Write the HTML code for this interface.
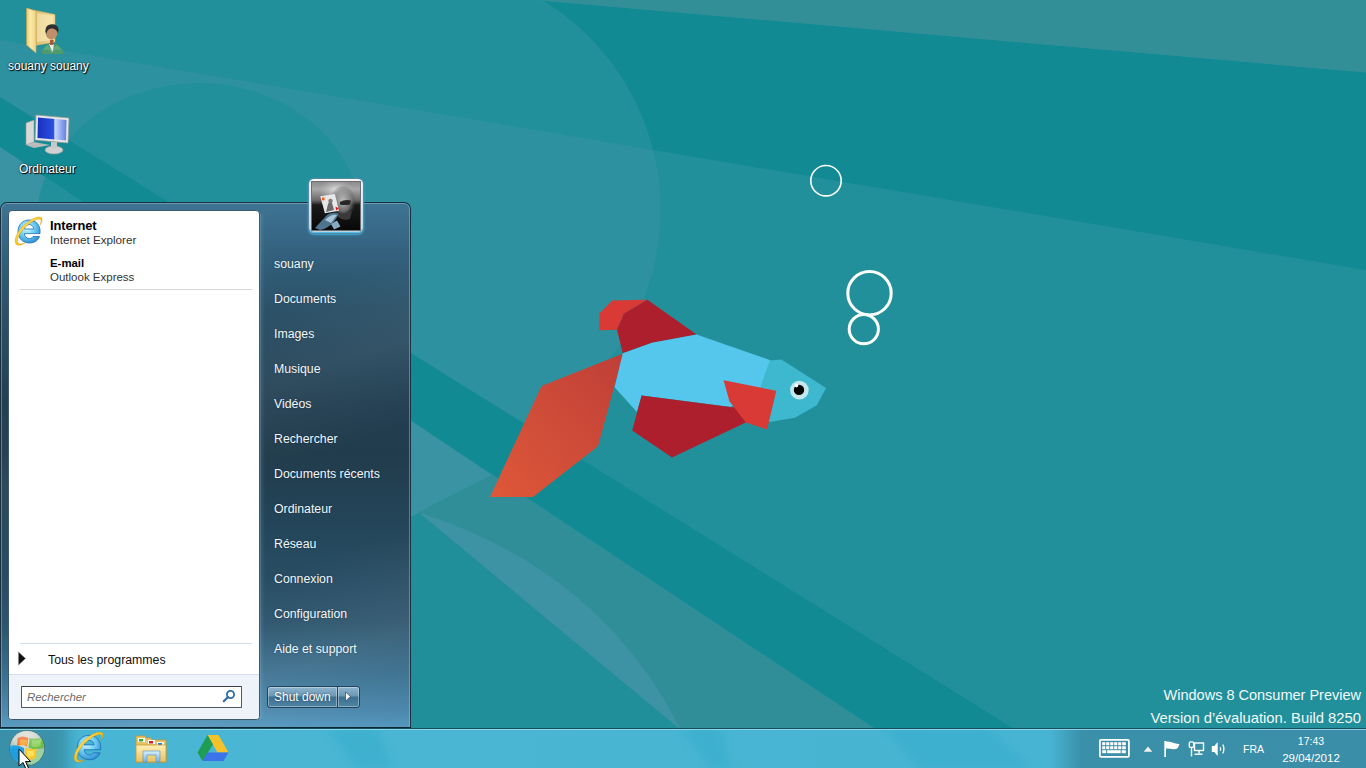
<!DOCTYPE html>
<html><head><meta charset="utf-8">
<style>
html,body{margin:0;padding:0;width:1366px;height:768px;overflow:hidden;background:#128a93;font-family:"Liberation Sans",sans-serif;}
.abs{position:absolute;}
#bg{position:absolute;left:0;top:0;width:1366px;height:768px;}
</style></head><body>
<svg id="bg" width="1366" height="768" viewBox="0 0 1366 768">
  <defs>
    <clipPath id="belowG"><polygon points="0,147 874,728 1366,1200 0,1200"/></clipPath>
    <clipPath id="belowB"><polygon points="0,40 1366,270 1366,768 0,768"/></clipPath>
    <clipPath id="rightArc"><path d="M415.5,-100 V-35.3 A245,245 0 0,1 415.5,454.7 V900 H1400 V-100 Z"/></clipPath>
    <clipPath id="bandCG"><polygon points="0,97 1366,948 1366,1200 0,1200 0,147 874,728 0,147"/></clipPath>
    <linearGradient id="tailg" x1="1" y1="0" x2="0" y2="1">
      <stop offset="0" stop-color="#bf3f38"/><stop offset="1" stop-color="#de5838"/>
    </linearGradient>
  </defs>
  <!-- base medium -->
  <rect width="1366" height="768" fill="#22909b"/>
  <!-- dark between A and B, outside circle -->
  <polygon points="0,0 534,0 1366,72.5 1366,270 0,40" fill="#128a93" clip-path="url(#rightArc)"/>
  <!-- above line A -->
  <polygon points="534,0 1366,0 1366,72.5" fill="#328f98"/>
  <!-- light below B, inside circle or left -->
  <g clip-path="url(#belowB)">
    <path d="M-10,-10 H415.5 V-35.3 A245,245 0 0,1 415.5,454.7 V800 H-10 Z" fill="#2e919f"/>
    <ellipse cx="199" cy="224" rx="163" ry="141" fill="#22909b"/>
  </g>
  <!-- dark band between C and G -->
  <polygon points="0,97 1366,948 1366,1200 1120,1200 0,147" fill="#128a93"/>
  <!-- region below G -->
  <polygon points="0,147 874,728 1366,1200 0,1200" fill="#218f9a"/>
  <!-- region 3 light -->
  <polygon points="0,147 492,475 419,512.5 0,726" fill="#3a93a3"/>
  <g clip-path="url(#belowG)"><ellipse cx="199" cy="224" rx="163" ry="141" fill="#22909b"/></g>
  <!-- wedge grayish -->
  <polygon points="419,512.5 492,475 874,728 681,730" fill="#2f8e98"/>
  <!-- lens -->
  <path d="M419,512.5 Q600,570 681,730 Z" fill="#3d93a3"/>

  <!-- fish -->
  <polygon points="623.3,353.6 541.6,386 490,497 533,497 598,446.2" fill="url(#tailg)"/>
  <polygon points="599.4,313.4 612.3,300.5 647.4,299.8 624,313.4 617,329.8 599.4,330.3" fill="#d93a35"/>
  <polygon points="647.4,299.8 696.6,334.5 652.1,342.7 622.8,353.3 617,329.8 624,313.4" fill="#ad1f2d"/>
  <polygon points="622.8,353.3 652.1,342.7 696.6,334.5 770.5,360.3 761,388.4 730.6,407 641.6,395.5 636.9,411.9 614.6,387.3" fill="#55c6ec"/>
  <polygon points="769.9,360.4 781.4,359.6 826.1,388 816.8,405.2 794.9,417.7 769.4,421.9 761,385.4" fill="#3db8cf"/>
  <polygon points="641.6,395.5 740,408.3 745.8,422.4 672,457.6 632.2,430.6" fill="#ad1f2d"/>
  <polygon points="723.6,380.2 776.3,390.8 767,429.4 745.8,422.4 729.4,401.3" fill="#d93a35"/>
  <circle cx="799.4" cy="390.1" r="9.3" fill="#c5e6ec"/>
  <circle cx="799" cy="389.9" r="5.2" fill="#000"/>
  <circle cx="796.5" cy="385.6" r="1.8" fill="#fff"/>
  <!-- bubbles -->
  <circle cx="826" cy="180.7" r="15.2" fill="none" stroke="#fff" stroke-width="1.6"/>
  <circle cx="869.5" cy="293.2" r="21.7" fill="none" stroke="#fff" stroke-width="3"/>
  <circle cx="863.8" cy="329.2" r="14.6" fill="none" stroke="#fff" stroke-width="3"/>
</svg>


<!-- START MENU -->
<div class="abs" id="sm" style="left:0;top:202px;width:411px;height:526px;">
  <div class="abs" style="left:0;top:0;width:409px;height:525px;border:1px solid #1a3040;border-bottom:none;border-radius:7px 7px 0 0;background:linear-gradient(180deg,#3f7494 0%,#386a88 5%,#315d78 12%,#2c5268 20%,#233f52 38%,#213c4c 48%,#24465a 62%,#2c546c 80%,#3a7090 90%,#4a88ad 97%,#5598bf 100%);overflow:hidden;">
    <div class="abs" style="left:0;top:0;right:0;bottom:0;background:linear-gradient(160deg,rgba(255,255,255,0) 30%,rgba(255,255,255,0.05) 42%,rgba(255,255,255,0) 55%,rgba(255,255,255,0) 70%,rgba(255,255,255,0.07) 85%,rgba(255,255,255,0) 100%);"></div>
    <div class="abs" style="left:0;top:0;right:0;bottom:0;border:1px solid rgba(160,200,225,0.45);border-bottom:1px solid rgba(170,215,240,0.8);border-radius:6px 6px 0 0;"></div>
  </div>
  <div class="abs" style="left:0;top:525px;width:411px;height:1px;background:#0f2633;"></div>
</div>
<div class="abs" style="left:260px;top:214px;width:5px;height:505px;background:linear-gradient(90deg,rgba(140,185,210,0.55) 0,rgba(140,185,210,0.15) 1px,rgba(140,185,210,0) 5px);"></div>
<!-- white panel -->
<div class="abs" style="left:8px;top:210px;width:250px;height:508px;border:1px solid #3c5a6e;border-radius:4px;background:#fff;overflow:hidden;">
  <div class="abs" style="left:0;top:463px;width:250px;height:45px;background:#eef3fa;border-top:1px solid #d3dfec;"></div>
</div>
<style>
.lt{position:absolute;left:50px;font-size:12px;color:#000;white-space:nowrap;line-height:14px;}
.lt b{font-weight:bold;}
.rt{position:absolute;left:274px;font-size:12.3px;color:#f2f6f8;white-space:nowrap;line-height:14px;text-shadow:0 0 2px rgba(0,20,40,0.35);}
</style>
<div class="lt" style="top:219px;font-weight:bold;font-size:12.9px;letter-spacing:-0.1px;">Internet</div>
<div class="lt" style="top:233px;color:#333;font-size:11.7px;">Internet Explorer</div>
<div class="lt" style="top:256px;font-weight:bold;font-size:11.4px;">E-mail</div>
<div class="lt" style="top:270px;color:#333;font-size:11.5px;">Outlook Express</div>
<div class="abs" style="left:20px;top:289px;width:232px;height:1px;background:#d8d8d8;"></div>
<div class="abs" style="left:20px;top:643px;width:232px;height:1px;background:#d4e0ee;"></div>
<div class="lt" style="left:48px;top:653px;color:#111;font-size:12.3px;">Tous les programmes</div>
<svg class="abs" style="left:17px;top:651px" width="10" height="15" viewBox="0 0 10 15"><path d="M1.5,1 L8.5,7.5 L1.5,14 Z" fill="#111" stroke="#888" stroke-width="0.6"/></svg>
<!-- search box -->
<div class="abs" style="left:21px;top:686px;width:219px;height:20px;border:1px solid #505a64;border-top-color:#3a3f44;background:#fff;border-radius:1px;"></div>
<div class="abs" style="left:27px;top:690px;font-size:11.4px;font-style:italic;color:#6a6a6a;line-height:14px;">Rechercher</div>
<svg class="abs" style="left:222px;top:689px" width="14" height="14" viewBox="0 0 14 14"><circle cx="8.5" cy="5.5" r="3.6" fill="none" stroke="#2d6da8" stroke-width="1.8"/><path d="M6,8 L1.8,12.2" stroke="#2d6da8" stroke-width="2.2" stroke-linecap="round"/></svg>

<div class="rt" style="top:257px;">souany</div>
<div class="rt" style="top:292px;">Documents</div>
<div class="rt" style="top:327px;">Images</div>
<div class="rt" style="top:362px;">Musique</div>
<div class="rt" style="top:397px;">Vidéos</div>
<div class="rt" style="top:432px;">Rechercher</div>
<div class="rt" style="top:467px;">Documents récents</div>
<div class="rt" style="top:502px;">Ordinateur</div>
<div class="rt" style="top:537px;">Réseau</div>
<div class="rt" style="top:572px;">Connexion</div>
<div class="rt" style="top:607px;">Configuration</div>
<div class="rt" style="top:642px;">Aide et support</div>
<!-- shut down -->
<div class="abs" style="left:267px;top:686px;width:69px;height:20px;border:1px solid #1f4460;border-radius:3px 0 0 3px;background:linear-gradient(180deg,#8fb5cc 0%,#6b98b5 45%,#3e7090 50%,#4f84a4 100%);box-shadow:inset 0 0 0 1px rgba(255,255,255,0.35);"></div>
<div class="abs" style="left:274px;top:690px;font-size:12px;color:#fff;line-height:14px;text-shadow:0 0 2px rgba(0,30,60,0.7);">Shut down</div>
<div class="abs" style="left:337px;top:686px;width:21px;height:20px;border:1px solid #1f4460;border-radius:0 3px 3px 0;background:linear-gradient(180deg,#8fb5cc 0%,#6b98b5 45%,#3e7090 50%,#4f84a4 100%);box-shadow:inset 0 0 0 1px rgba(255,255,255,0.35);"></div>
<svg class="abs" style="left:344px;top:691px" width="8" height="11" viewBox="0 0 8 11"><path d="M1.5,1 L6.5,5.5 L1.5,10 Z" fill="#fff" stroke="#2a4a60" stroke-width="0.7"/></svg>
<!-- user picture -->
<div class="abs" style="left:308px;top:178px;width:54px;height:54px;border:1px solid #5a8aa5;border-radius:6px;background:linear-gradient(180deg,#f6f9fb 0%,#e2ecf2 45%,#c4d8e4 100%);box-shadow:0 1px 2px rgba(58,176,224,0.9), inset 0 -1px 1px #48b8e8;"></div>
<div class="abs" style="left:312px;top:182px;width:48px;height:48px;overflow:hidden;background:linear-gradient(180deg,#8c8c8c 0%,#a8a8a8 15%,#6a6a6a 38%,#1a1a1a 48%,#080808 100%);box-shadow:0 0 0 1px #6e6e6e;">
  <svg width="48" height="48" viewBox="0 0 48 48">
    <defs><radialGradient id="face" cx="0.5" cy="0.45" r="0.5"><stop offset="0" stop-color="#c8c8c8" stop-opacity="0.95"/><stop offset="0.6" stop-color="#8a8a8a" stop-opacity="0.7"/><stop offset="1" stop-color="#404040" stop-opacity="0"/></radialGradient>
    <radialGradient id="smoke" cx="0.5" cy="0.5" r="0.5"><stop offset="0" stop-color="#e8e8e8" stop-opacity="0.85"/><stop offset="1" stop-color="#c0c0c0" stop-opacity="0"/></radialGradient></defs>
    <ellipse cx="24" cy="8" rx="17" ry="11" fill="url(#smoke)"/>
    <ellipse cx="31" cy="21" rx="13" ry="17" fill="url(#face)"/>
    <path d="M28,20 Q33,17 39,18.5 L38,22.5 Q32,23.5 28,22.5 Z" fill="#262626"/>
    <path d="M27,31 Q33,34 40,29 L38,37 Q31,39 26,35 Z" fill="#3a3a3a"/>
    <polygon points="8.3,14.2 22.9,12.1 27,28.75 12.9,31.25" fill="#e8e8e8"/>
    <path d="M14,30 L16,22 Q18,18 20,21 L22,28 Z" fill="#6a6a6a"/>
    <circle cx="18.5" cy="19" r="2.2" fill="#7a7a7a"/>
    <rect x="10" y="15.5" width="2.6" height="2.8" fill="#f05a20"/>
    <polygon points="23.5,24.5 27,26.5 24,28.5" fill="#e81818"/>
    <path d="M3,46 L15,33 Q21,29 27,32 L22,40 Q15,47 8,48 Z" fill="#4e7490"/>
    <path d="M13,38 Q19,32 25,33 L19,41 Z" fill="#a8c4d8"/>
    <path d="M19,42 L25,38.5 L28.5,44.5 L22,47.5 Z" fill="#88aac0"/>
  </svg>
</div>
<!-- watermark -->
<div class="abs" style="right:5px;top:686.5px;font-size:14.5px;color:#f4f8f8;line-height:17px;white-space:nowrap;text-align:right;">Windows 8 Consumer Preview</div>
<div class="abs" style="right:5px;top:710px;font-size:14.8px;color:#f4f8f8;line-height:17px;white-space:nowrap;text-align:right;">Version d’évaluation. Build 8250</div>
<!-- desktop icons -->
<style>.dl{position:absolute;font-size:12px;color:#fff;line-height:14px;white-space:nowrap;text-shadow:1px 1px 1px #000,0 0 2px rgba(0,0,0,0.8);}</style>
<div class="dl" style="left:8px;top:59px;">souany souany</div>
<div class="dl" style="left:19px;top:162px;">Ordinateur</div>
<svg class="abs" style="left:24px;top:6px" width="42" height="50" viewBox="0 0 42 50">
  <defs><linearGradient id="fld" x1="0" y1="0" x2="1" y2="0"><stop offset="0" stop-color="#e8c870"/><stop offset="0.4" stop-color="#fbeaa8"/><stop offset="1" stop-color="#f0d488"/></linearGradient>
  <linearGradient id="fldb" x1="0" y1="0" x2="1" y2="0"><stop offset="0" stop-color="#d8b868"/><stop offset="1" stop-color="#f4dc98"/></linearGradient></defs>
  <polygon points="9,4 31,8.5 31,36 9,40" fill="url(#fldb)" stroke="#d0b060" stroke-width="0.5"/>
  <polygon points="13,7 29,10 29,34 13,36" fill="#f8ecc0" opacity="0.6"/>
  <polygon points="2.5,2 12,5 12,47 2.5,39" fill="url(#fld)" stroke="#c8a450" stroke-width="0.6"/>
  <g transform="translate(2,1)">
  <path d="M16,47 Q16,37 26,36.5 Q36,37 37.5,47 Z" fill="#4f9a6c"/>
  <path d="M21,38 Q26,44 31,38 Q34,40 35,44 Q30,40 26,46 Q22,40 17.5,44 Q18.5,40 21,38Z" fill="#6ab888" opacity="0.6"/>
  <path d="M23,37 L28,37 L26.5,45 Z" fill="#f0f0f0"/>
  <rect x="24" y="33" width="3.5" height="5" fill="#a85a38"/>
  <ellipse cx="25.5" cy="25.5" rx="6" ry="7.2" fill="#c0906a"/>
  <path d="M19.3,24.5 Q19.3,17.3 26,17.3 Q32.2,17.3 32.7,23 L31.7,26 Q30,21 25,21.5 Q21,22 20.5,27 Z" fill="#2e2e2e"/>
  </g>
</svg>
<svg class="abs" style="left:24px;top:112px" width="50" height="46" viewBox="0 0 50 46">
  <defs><linearGradient id="scr" x1="0" y1="0" x2="1" y2="0"><stop offset="0" stop-color="#1a2fc0"/><stop offset="0.55" stop-color="#2a50e0"/><stop offset="0.6" stop-color="#c8d8ff"/><stop offset="1" stop-color="#6080e0"/></linearGradient></defs>
  <path d="M2,11 L10,8 L10,30 L2,33 Z" fill="#d8d8d8" stroke="#999" stroke-width="0.6"/>
  <path d="M10,30 L26,33 L10,36 L2,33Z" fill="#bbb"/>
  <polygon points="12,3 45,6 44,31 11,28" fill="#e8e8e8" stroke="#9a9a9a" stroke-width="0.8"/>
  <polygon points="14,5.5 42.5,8 42,28.5 13.5,26" fill="url(#scr)"/>
  <ellipse cx="30" cy="38" rx="9" ry="4" fill="#d0d0d0" stroke="#a0a0a0" stroke-width="0.6"/>
  <rect x="27" y="30" width="6" height="6" fill="#c8c8c8"/>
</svg>
<!-- TASKBAR -->
<div class="abs" style="left:0;top:728px;width:1366px;height:40px;background:linear-gradient(90deg,#3a8fa8 0px,#3b92aa 53px,#3c98b1 62px,#42a8c4 70px,#49b5d4 80px,#4ab6d4 300px,#48b4d3 1050px,#3a8fa9 1082px,#3a8ea8 1366px);"></div>
<svg class="abs" style="left:0;top:728px" width="1366" height="40" viewBox="0 0 1366 40">
  <defs><filter id="tbblur"><feGaussianBlur stdDeviation="4"/></filter></defs>
  <g filter="url(#tbblur)" fill="#2aa8c8" opacity="0.35">
    <polygon points="326,0 378,0 392,40 357,40"/>
    <polygon points="680,0 721,0 732,40 710,40"/>
    <polygon points="882,0 988,0 1032,40 919,40"/>
  </g>
</svg>
<div class="abs" style="left:0;top:728px;width:1366px;height:1px;background:#17505c;"></div>
<div class="abs" style="left:0;top:729px;width:1366px;height:1px;background:rgba(150,220,240,0.85);"></div>
<!-- start orb -->
<svg class="abs" style="left:8px;top:730px" width="38" height="38" viewBox="0 0 38 38">
  <defs>
    <radialGradient id="orb" cx="0.45" cy="0.3" r="0.75"><stop offset="0" stop-color="#e6e2d6"/><stop offset="0.55" stop-color="#b8c8c0"/><stop offset="1" stop-color="#5a8a90"/></radialGradient>
    <linearGradient id="gloss" x1="0" y1="0" x2="0" y2="1"><stop offset="0" stop-color="#fff" stop-opacity="0.8"/><stop offset="1" stop-color="#fff" stop-opacity="0"/></linearGradient>
    <clipPath id="orbc"><circle cx="19" cy="18" r="17.3"/></clipPath>
  </defs>
  <circle cx="19" cy="18" r="17.5" fill="url(#orb)" stroke="#3a6a70" stroke-width="0.8"/>
  <g clip-path="url(#orbc)">
    <path d="M-2,17 Q8,13 16,18 L16,40 L-2,40 Z" fill="#28a8e0"/>
    <path d="M20,19 Q28,22 40,17 L40,30 Q30,38 20,34 Z" fill="#9ed0a0"/>
    <path d="M9.5,8 Q14,5 20.5,8 L19,16.5 Q14.5,14 9,16 Z" fill="#f06a28"/>
    <path d="M12,10 Q15,9 19.5,10.5 L18.5,16 Q15,14.5 11.5,15.5 Z" fill="#f8b030" opacity="0.8"/>
    <path d="M21.5,8 Q27,10 35.5,7 L35,17.5 Q28,21 20.5,17.5 Z" fill="#6cc048"/>
    <path d="M24,10 Q28,11 33,9.5 L32.5,16 Q28,18 23.5,16.5 Z" fill="#a0d870" opacity="0.7"/>
    <path d="M17,17.5 Q22,20 28.5,18.5 L28,28 Q22,31 17.5,28.5 Z" fill="#f8c828"/>
    <path d="M19,20 Q22,21.5 26,20.5 L25.5,26 Q22,27.5 19.5,26 Z" fill="#fde870" opacity="0.8"/>
    <path d="M2,19 Q8,16 16,18.5 L15,30 Q8,28 3,31 Z" fill="#1c9ee0"/>
    <ellipse cx="19" cy="9" rx="15" ry="9" fill="url(#gloss)" opacity="0.55"/>
  </g>
</svg>
<!-- IE icon defs -->
<svg width="0" height="0" style="position:absolute">
  <defs>
    <radialGradient id="ieb" cx="0.4" cy="0.35" r="0.7"><stop offset="0" stop-color="#d8f8ff"/><stop offset="0.45" stop-color="#78d4f8"/><stop offset="1" stop-color="#2a8cd0"/></radialGradient>
    <linearGradient id="iey" x1="0" y1="0" x2="1" y2="1"><stop offset="0" stop-color="#fff2a0"/><stop offset="0.5" stop-color="#f8c820"/><stop offset="1" stop-color="#e8a010"/></linearGradient>
    <symbol id="ie" viewBox="0 0 32 32">
      <path d="M16,5 C9.5,5 5,10 5,16.5 C5,23 9.5,28 16.5,28 C21.5,28 25,25.5 26.5,21.5 L20,21.5 C19,23 17.8,23.5 16.3,23.5 C13.5,23.5 11.6,21.5 11.3,18.6 L27,18.6 C27.1,17.8 27.1,17 27.1,16.3 C27.1,9.8 22.6,5 16,5 Z M11.4,14 C11.8,11.4 13.6,9.6 16.2,9.6 C18.8,9.6 20.5,11.4 20.8,14 Z" fill="url(#ieb)" stroke="#1a70b8" stroke-width="0.8"/>
      <path d="M28.5,2.5 C25.5,0.5 17,4 10,11 C3.5,17.5 0.5,25.5 3,29 C4.5,31 8,30.5 12,28 C8.5,29.2 6,29.2 5,28 C3.2,25.5 6,18.5 12,12.5 C18.5,6 25.5,3 27.5,4.5 C28.5,5.3 28.2,7.5 27,10 C29.3,6.8 29.8,3.6 28.5,2.5 Z" fill="url(#iey)" stroke="#d89000" stroke-width="0.4"/>
    </symbol>
  </defs>
</svg>
<svg class="abs" style="left:13px;top:215px" width="32" height="32"><use href="#ie"/></svg>
<svg class="abs" style="left:72px;top:730px" width="34" height="34"><use href="#ie"/></svg>
<!-- folder (explorer) taskbar -->
<svg class="abs" style="left:134px;top:733px" width="34" height="32" viewBox="0 0 34 32">
  <defs><linearGradient id="fy" x1="0" y1="0" x2="0" y2="1"><stop offset="0" stop-color="#fff0b8"/><stop offset="1" stop-color="#e8c060"/></linearGradient>
  <linearGradient id="fb" x1="0" y1="0" x2="0" y2="1"><stop offset="0" stop-color="#d8f0ff"/><stop offset="1" stop-color="#70b0e0"/></linearGradient></defs>
  <path d="M2,3 L11,3 L12,5 L17,5 L18,7 L32,7 L32,29 L2,29 Z" fill="#e8c468" stroke="#c89a30" stroke-width="0.8"/>
  <rect x="4" y="5" width="7" height="4" fill="#fff"/><rect x="5" y="6" width="4" height="2.5" fill="#30b030"/>
  <rect x="14" y="7" width="7" height="4" fill="#fff"/><rect x="15" y="8" width="4" height="2.5" fill="#d02020"/>
  <rect x="23" y="9" width="7" height="4" fill="#fff"/><rect x="24" y="10" width="4" height="2.5" fill="#2080e0"/>
  <path d="M2,12 L32,12 L32,29 L2,29 Z" fill="url(#fy)" stroke="#c89a30" stroke-width="0.8"/>
  <path d="M9,18 L26,18 L26,29 L22,29 L22,22 L13,22 L13,29 L9,29 Z" fill="url(#fb)" stroke="#5090c0" stroke-width="0.6"/>
</svg>
<!-- google drive -->
<svg class="abs" style="left:197px;top:734px" width="32" height="28" viewBox="0 0 32 28">
  <polygon points="10.5,1 21.5,1 31.5,18.5 20.5,18.5" fill="#f6c22a"/>
  <polygon points="10.5,1 16,10.5 5.5,27 0.5,18.5" fill="#1f9d55"/>
  <polygon points="20.5,18.5 31.5,18.5 26.5,27 5.5,27 10.5,18.5" fill="#3b73e8"/>
</svg>
<!-- tray -->
<svg class="abs" style="left:1099px;top:739px" width="31" height="19" viewBox="0 0 31 19">
  <rect x="0.9" y="0.9" width="29" height="17" rx="1.2" fill="none" stroke="#fff" stroke-width="1.8"/>
  <g fill="#fff">
    <rect x="3.2" y="3.2" width="3.1" height="3"/><rect x="7.2" y="3.2" width="3.1" height="3"/><rect x="11.2" y="3.2" width="3.1" height="3"/><rect x="15.2" y="3.2" width="3.1" height="3"/><rect x="19.2" y="3.2" width="3.1" height="3"/><rect x="23.2" y="3.2" width="3.6" height="3"/>
    <rect x="3.2" y="7.2" width="3.1" height="3"/><rect x="7.2" y="7.2" width="3.1" height="3"/><rect x="11.2" y="7.2" width="3.1" height="3"/><rect x="15.2" y="7.2" width="3.1" height="3"/><rect x="19.2" y="7.2" width="3.1" height="3"/><rect x="23.2" y="7.2" width="3.6" height="3"/>
    <rect x="3.2" y="11.2" width="4" height="3"/><rect x="8.2" y="11.2" width="13.5" height="3"/><rect x="22.7" y="11.2" width="4.1" height="3"/>
  </g>
</svg>
<svg class="abs" style="left:1143px;top:746px" width="10" height="7" viewBox="0 0 10 7"><polygon points="5,0.5 9.3,5.8 0.7,5.8" fill="#f0f0f0"/></svg>
<svg class="abs" style="left:1163px;top:740px" width="18" height="18" viewBox="0 0 18 18">
  <rect x="1.3" y="1" width="1.7" height="16" fill="#fff"/>
  <path d="M3,1.6 Q6,1.2 8.5,2.2 Q11,3.2 16.5,4.2 Q15.5,6.5 14.8,8 Q12.5,9.8 9,9 Q6,8.3 3,8.6 Z" fill="#fff"/>
</svg>
<svg class="abs" style="left:1188px;top:741px" width="17" height="17" viewBox="0 0 17 17">
  <rect x="1.3" y="0.9" width="4.4" height="5.5" rx="1.4" fill="none" stroke="#fff" stroke-width="1.4"/>
  <rect x="2.8" y="6.4" width="1.4" height="9" fill="#fff"/>
  <rect x="6.5" y="2" width="9" height="7.5" fill="none" stroke="#fff" stroke-width="1.4"/>
  <rect x="10.3" y="9.5" width="1.4" height="3" fill="#fff"/>
  <rect x="6.5" y="12.5" width="8" height="1.4" fill="#fff"/>
</svg>
<svg class="abs" style="left:1211px;top:741px" width="18" height="16" viewBox="0 0 18 16">
  <path d="M0.8,5 L3.3,5 L6.7,1 L6.7,15 L3.3,11 L0.8,11 Z" fill="#fff"/>
  <path d="M9.2,6.2 Q10.2,8 9.2,9.8" fill="none" stroke="#fff" stroke-width="1.3"/>
  <path d="M11.8,3.5 Q14,8 11.8,12.5" fill="none" stroke="#fff" stroke-width="1.3"/>
</svg>
<div class="abs" style="left:1243px;top:741.5px;font-size:10.5px;color:#fff;line-height:14px;">FRA</div>
<div class="abs" style="left:1280px;top:734px;width:62px;text-align:center;font-size:10.5px;color:#fff;line-height:14px;">17:43</div>
<div class="abs" style="left:1280px;top:751px;width:62px;text-align:center;font-size:11.5px;color:#fff;line-height:14px;">29/04/2012</div>
<!-- cursor -->
<svg class="abs" style="left:18px;top:748px" width="16" height="23" viewBox="0 0 16 23"><path d="M1,1 L1,18 L5,14.5 L8,21 L10.5,20 L7.5,13.5 L12.5,13.5 Z" fill="#fff" stroke="#000" stroke-width="1"/></svg>
</body></html>
